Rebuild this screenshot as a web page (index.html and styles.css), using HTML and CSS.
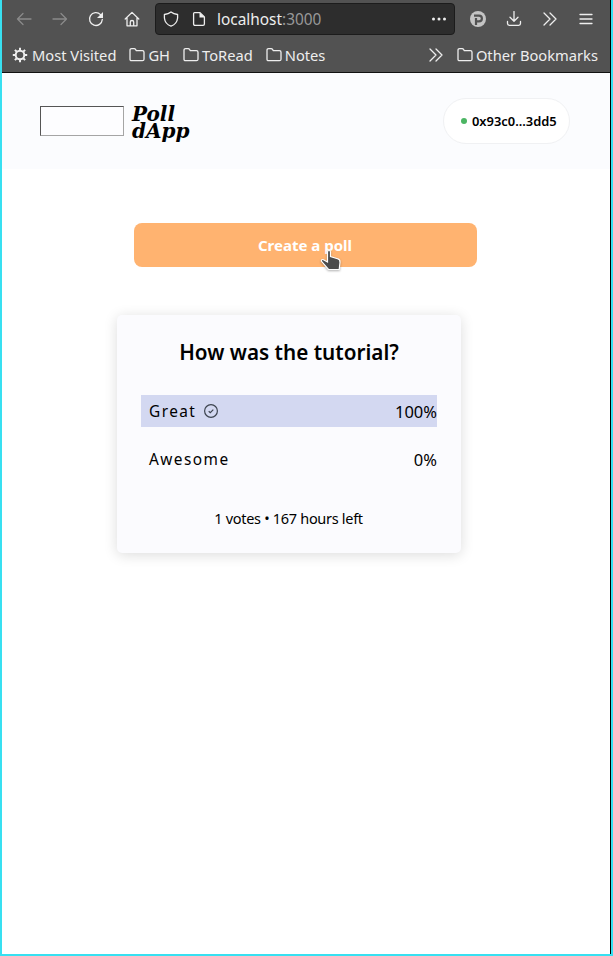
FILE: index.html
```html
<!DOCTYPE html>
<html lang="en">
<head>
<meta charset="utf-8">
<title>Poll dApp</title>
<link rel="stylesheet" href="styles.css">
</head>
<body>
<svg class="defs" aria-hidden="true">
  <symbol id="folder" viewBox="0 0 16 16"><path d="M1 12.500V3.200Q1 1.600 2.600 1.600H5.200Q6 1.600 6.500 2.400L7.300 3.600H13.400Q15 3.600 15 5.200V12.200Q15 13.700 13.400 13.700H2.500Q1 13.700 1 12.200Z"/></symbol>
  <symbol id="chevrons" viewBox="0 0 16 16"><path d="M2 2l6 6-6 6M8 2l6 6-6 6"/></symbol>
</svg>
<div class="window">
  <header class="chrome">
    <div class="toolbar">
      <span class="tool dim"><svg class="icon" viewBox="0 0 16 16"><path d="M15 8H1.500M7 2.500L1.500 8 7 13.500"/></svg></span>
      <span class="tool dim"><svg class="icon" viewBox="0 0 16 16"><path d="M1 8h13.500M9 2.500L14.500 8 9 13.500"/></svg></span>
      <span class="tool"><svg class="icon" viewBox="0 0 16 16"><path d="M12.500 3.600A6.400 6.400 0 1 0 14.300 8.500"/><path class="solid" d="M15 1v6H9z"/></svg></span>
      <span class="tool"><svg class="icon" viewBox="0 0 16 16"><path d="M1.200 8L8 1.400 14.800 8M3 6.500V14.800H13V6.500M6.300 14.500V11Q6.300 9.500 8 9.500T9.700 11V14.500"/></svg></span>
      <div class="address">
        <svg class="icon" viewBox="0 0 16 16"><path d="M8 .9Q10.500 3 14.600 3.500V7Q14 13 8 15.200 2 13 1.400 7V3.500Q5.500 3 8 .9Z"/></svg>
        <svg class="icon page" viewBox="0 0 16 16"><path d="M3.600 1.600H9L13.400 6V13Q13.400 14.400 12 14.400H4Q2.600 14.400 2.600 13V2.600Q2.600 1.600 3.600 1.600Z"/><path class="solid" d="M8.500 1.200L13.800 6.600H8.500Z"/></svg>
        <span class="url">localhost<i>:3000</i></span>
        <svg class="icon" viewBox="0 0 16 16"><g class="solid"><circle cx="2.500" cy="8" r="1.500"/><circle cx="8" cy="8" r="1.500"/><circle cx="13.500" cy="8" r="1.500"/></g></svg>
      </div>
      <span class="tool grey"><svg class="icon" viewBox="0 0 16 16"><circle class="solid" cx="8" cy="8" r="8"/><path class="mark" d="M6 14V7M4 4.600H9A2.900 2.900 0 0 1 9 10.400H6"/></svg></span>
      <span class="tool"><svg class="icon" viewBox="0 0 16 16"><path d="M8 .5V10M4 6.300L8 10.300 12 6.300M1.500 10.500V12.500Q1.500 14.300 3.300 14.300H12.700Q14.500 14.300 14.500 12.500V10.500"/></svg></span>
      <span class="tool"><svg class="icon"><use href="#chevrons"/></svg></span>
      <span class="tool"><svg class="icon" viewBox="0 0 16 16"><path d="M2 3.500H14M2 8H14M2 12.500H14"/></svg></span>
    </div>
    <nav class="bookmarks">
      <span class="bookmark visited"><svg class="icon gear" viewBox="0 0 16 16"><circle cx="8" cy="8" r="4.300"/><path d="M8 .8V3.500M8 12.500V15.200M.8 8H3.500M12.500 8H15.200M2.900 2.900L4.800 4.800M11.200 11.200L13.100 13.100M13.100 2.900L11.200 4.800M4.800 11.200L2.900 13.100"/></svg>Most Visited</span>
      <span class="bookmark"><svg class="icon"><use href="#folder"/></svg>GH</span>
      <span class="bookmark"><svg class="icon"><use href="#folder"/></svg>ToRead</span>
      <span class="bookmark"><svg class="icon"><use href="#folder"/></svg>Notes</span>
      <svg class="icon more"><use href="#chevrons"/></svg>
      <span class="bookmark"><svg class="icon"><use href="#folder"/></svg>Other Bookmarks</span>
    </nav>
  </header>
  <div class="site-header">
    <div class="logo-box"></div>
    <div class="brand">Poll<br>dApp</div>
    <div class="account"><span class="dot"></span>0x93c0...3dd5</div>
  </div>
  <main>
    <div class="create">Create a poll
      <svg class="cursor" viewBox="0 0 22 24"><path d="M7.500 3Q7.500 1.500 9 1.500T10.500 3V7.500L17.500 9.700Q20.300 10.500 20 13.500L19.200 20.500H8.500L1.500 12.300Q1 10.300 3 10.500L7.500 13Z"/></svg>
    </div>
    <section class="card">
      <h1>How was the tutorial?</h1>
      <div class="option chosen"><span class="label">Great</span><svg class="check" viewBox="0 0 16 16"><circle cx="8" cy="8" r="6.400"/><path d="M5.700 8.200L7.300 9.700 10.300 6.600"/></svg><span class="percent">100%</span></div>
      <div class="option"><span class="label">Awesome</span><span class="percent">0%</span></div>
      <p class="summary">1 votes • 167 hours left</p>
    </section>
  </main>
</div>
</body>
</html>
```
FILE: styles.css
```css
* { box-sizing: border-box; }
body { margin: 0; font-family: "Noto Sans", sans-serif; background: #fff; }
.defs { position: absolute; width: 0; height: 0; }
.window {
  height: 956px;
  border: solid #38e0f1;
  border-width: 0 2px 2px;
  box-shadow: inset -1px 0 #000;
  overflow: hidden;
}
.chrome {
  height: 73px;
  margin-right: 1px;
  background: #525252;
  border-bottom: 1px solid #111;
  color: #eee;
}
.toolbar { display: flex; align-items: center; height: 38px; padding-left: 4px; }
.tool { display: flex; flex: none; justify-content: center; width: 36px; }
.icon {
  flex: none;
  width: 16px;
  height: 16px;
  fill: none;
  stroke: currentColor;
  stroke-width: 1.3;
  stroke-linejoin: round;
  stroke-linecap: round;
}
.solid { fill: currentColor; stroke: none; }
.dim { color: #8a8a8a; }
.grey { color: #c4c4c4; }
.mark { stroke: #525252; stroke-width: 2.2; stroke-linecap: butt; stroke-linejoin: miter; }
.address {
  display: flex;
  align-items: center;
  flex: none;
  width: 300px;
  height: 32px;
  margin: 0 5px;
  padding: 0 7px;
  background: #2d2d2d;
  border: 1px solid #1c1c1c;
  border-radius: 4px;
}
.page { margin-left: 12px; }
.url { flex: 1; margin-left: 10px; padding-top: 2px; font-size: 15.4px; line-height: 20px; }
.url i { color: #989898; font-style: normal; }
.bookmarks { display: flex; align-items: center; height: 34px; padding: 0 12px 0 10px; font-size: 14.7px; white-space: nowrap; }
.bookmark { display: flex; align-items: center; gap: 3px; margin-right: 13px; }
.visited { gap: 4px; }
.gear { stroke-width: 2; stroke-linecap: butt; }
.more { margin: 0 13px 0 auto; }
.bookmark:last-child { margin-right: 0; }
.site-header {
  display: flex;
  align-items: center;
  height: 96px;
  margin-right: 1px;
  padding: 0 40px 0 38px;
  background: #fbfcfe;
}
.logo-box { width: 84px; height: 30px; border: 1px solid #a5a5a5; border-top-color: #555; border-left-color: #555; background: #fdfdff; }
.brand { margin: 4px 0 0 8px; font: italic bold 20px/17px "DejaVu Serif", serif; color: #000; }
.account {
  display: flex;
  align-items: center;
  width: 127px;
  height: 46px;
  margin-left: auto;
  padding-left: 17px;
  background: #fff;
  border: 1px solid #f0f1f3;
  border-radius: 23px;
  font-size: 12.9px;
  font-weight: 600;
  white-space: nowrap;
}
.dot { width: 6px; height: 6px; margin-right: 5px; border-radius: 50%; background: #4bb563; }
.create {
  position: relative;
  width: 343px;
  height: 44px;
  margin: 54px 0 0 132px;
  padding-right: 1px;
  border-radius: 8px;
  background: #ffb370;
  color: #fff;
  font: bold 15px/45px "Noto Sans", sans-serif;
  text-align: center;
}
.cursor {
  position: absolute;
  left: 186px;
  top: 26px;
  width: 22px;
  height: 24px;
  fill: #4b4b4b;
  stroke: #fff;
  stroke-width: 1.2;
  filter: drop-shadow(0 1px 1px rgba(0, 0, 0, .3));
}
.card {
  width: 344px;
  height: 238px;
  margin: 48px 0 0 115px;
  padding: 23px 24px 0;
  background: #fbfbfe;
  border-radius: 5px;
  box-shadow: 0 2px 14px rgba(0, 0, 0, .14);
  color: #000;
}
.card h1 { margin: 0 0 29px; font-size: 20.7px; font-weight: 600; line-height: 28px; text-align: center; white-space: nowrap; }
.option { display: flex; align-items: center; height: 32px; margin-bottom: 16px; padding-left: 8px; font-size: 15.4px; }
.chosen { background: #d3d8f1; }
.label { letter-spacing: 1.45px; }
.check { width: 16px; height: 16px; margin-left: 7px; fill: none; stroke: #3d444f; stroke-width: 1.2; }
.percent { margin-left: auto; font-size: 16.5px; }
.summary { margin: 33px 1px 0 0; font-size: 14.5px; line-height: 20px; letter-spacing: -.3px; text-align: center; }
```
